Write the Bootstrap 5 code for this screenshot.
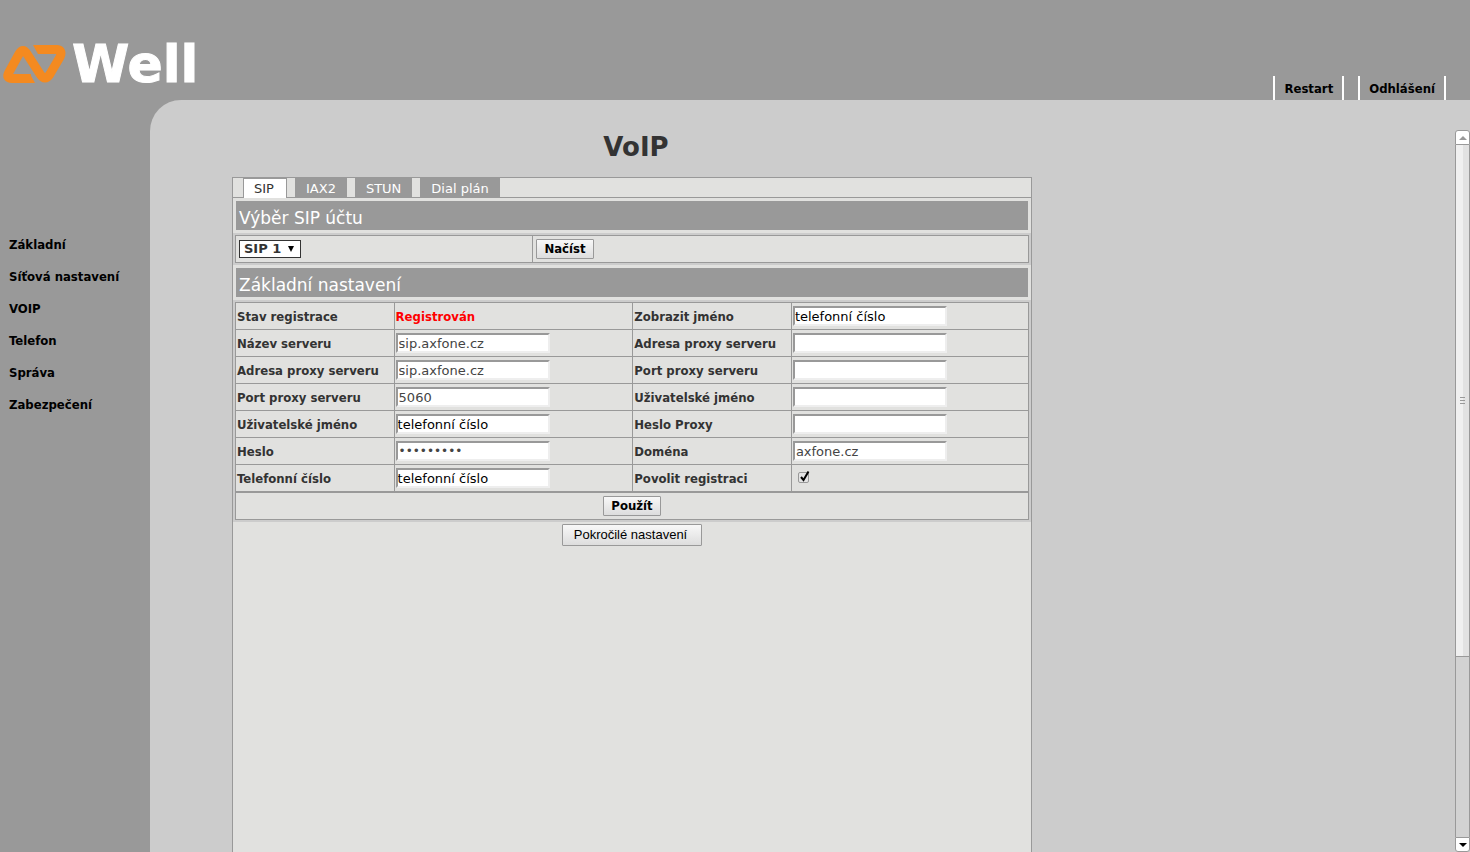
<!DOCTYPE html>
<html lang="cs">
<head>
<meta charset="utf-8">
<meta name="viewport" content="width=device-width, initial-scale=1">
<title>Well VoIP</title>
<link href="https://cdn.jsdelivr.net/npm/bootstrap@5.3.0/dist/css/bootstrap.min.css" rel="stylesheet">
<style>
  body { background: #999; color: #333; font: 13px/20px "DejaVu Sans", Verdana, sans-serif; }
  .side-link, .top-link, .grid th, .grid .status, .btn-small { font-family: "DejaVu Sans Condensed", "DejaVu Sans", sans-serif; font-weight: 700; }
  .top-bar { height: 100px; }
  .brand-word { font: 700 52px/52px "DejaVu Sans", sans-serif; color: #fff; -webkit-text-stroke: 1px #fff; }
  .top-links { gap: 14px; }
  .top-link { color: #000; text-decoration: none; border: solid #fff; border-width: 0 2px; line-height: 22px; padding: 2px 9px 0; }
  .side { width: 150px; padding: 135px 0 0 9px; }
  .side-link { color: #000; text-decoration: none; line-height: 20px; margin-bottom: 12px; }
  .content { background: #ccc; border-top-left-radius: 31px; }
  .page { padding-left: 82px; padding-top: 32px; }
  .page h1 { font: 700 26px/30px "DejaVu Sans", sans-serif; margin: 0 0 15px; padding-left: 8px; }
  .sheet, .sheet-head { max-width: 800px; }
  .sheet { background: #e1e1df; border: 1px solid #999; border-bottom: 0; }
  .tabs { height: 20px; border-bottom: 1px solid #999; padding-left: 10px; }
  .tabs .tab { color: #fff; background: #999; text-decoration: none; line-height: 21px; padding: 0 11px; height: 19px; }
  .tabs .tab.current { color: #333; background: #fff; border: 1px solid #999; border-bottom: 0; height: 20px; line-height: 19px; padding: 0 10px; min-width: 44px; }
  .caption-wrap { padding: 3px; }
  .caption-wrap h2 { background: #999; color: #fff; font: 400 17px/29px "DejaVu Sans", sans-serif; margin: 0; padding: 3px 3px 0; height: 29px; }
  .grid-wrap { background: #ccc; padding: 2px; }
  .grid { width: 100%; border-collapse: collapse; table-layout: fixed; background: #e1e1df; }
  .grid th, .grid td { border: 1px solid #999; padding: 0 1px; height: 27px; vertical-align: middle; }
  .grid th, .grid .status { padding-top: 2px; }
  .grid .lead-in { padding-left: 3px; }
  .grid .status { color: #f00; }
  .apply-row { border: 1px solid #999; background: #e1e1df; height: 28px; }
  .field { display: block; width: 154px; height: 20px; padding: 0 1px; border: 2px solid; border-color: #999 #eee #eee #999; border-radius: 0; background: #fff; color: #444; font: 13px/16px "DejaVu Sans", sans-serif; outline-offset: 0; }
  .field.own { color: #000; padding: 0; }
  .field[type=password] { font-size: 12px; }
  .pick { display: block; appearance: none; width: 62px; height: 18px; border: 1px solid #333; border-radius: 0; padding: 0 4px; color: #333; font: 700 13px/16px "DejaVu Sans", sans-serif; background: #fff url("data:image/svg+xml,%3Csvg xmlns='http://www.w3.org/2000/svg' width='6' height='6'%3E%3Cpath d='M0 0h6L3 6z'/%3E%3C/svg%3E") no-repeat right 6px center; }
  .btn-small, .btn-more { border: 1px solid #999; border-radius: 1px; background: linear-gradient(#f8f8f8, #ddd); color: #000; }
  .btn-small { line-height: 18px; height: 20px; padding: 0 7px; }
  .btn-more { font: 13px/20px "Liberation Sans", Arial, sans-serif; width: 140px; height: 22px; padding: 0 3px 0 0; }
  .more-row { padding-top: 2px; }
  .tick { display: block; appearance: none; width: 14px; height: 14px; margin: 0 0 2px 4px; background: url("data:image/svg+xml,%3Csvg xmlns='http://www.w3.org/2000/svg' width='14' height='14'%3E%3Crect x='1.5' y='2.500' width='10' height='10' rx='1.500' fill='%23e4e4e4' stroke='%23999'/%3E%3Cpath d='M4 7l2.500 3L11.500 1.500' fill='none' stroke='%23000' stroke-width='2'/%3E%3C/svg%3E"); }
  .scroller { width: 15px; margin-top: 30px; }
  .scroller .arrow { height: 15px; background: #fff; border: 1px solid #999; }
  .scroller .up { border-radius: 3px 3px 0 0; }
  .scroller .down { border-radius: 0 0 3px 3px; }
  .scroller .track { background: #d2d2d2; border: solid #999; border-width: 0 1px; }
  .scroller .thumb { height: 74%; border-bottom: 1px solid #999; background: linear-gradient(90deg, #f0f0f0 55%, #e2e2e2 55%); }
</style>
</head>
<body class="min-vh-100 d-flex flex-column">
<header class="top-bar d-flex justify-content-between align-items-end">
  <a href="#" class="d-flex align-items-center text-decoration-none mb-2" aria-label="Well">
    <svg width="68" height="56" viewBox="0 36 68 56" aria-hidden="true">
      <path d="M31 78.500H12Q6 78.500 8.500 73L19 54Q23 47 27 54L40 74Q45 82 50 74L60 57Q63 50 57 49.500H38" fill="none" stroke="#f48a20" stroke-width="9"/>
      <path d="M30 74l5 9h-5zM33 45h5v9z" fill="#f48a20"/>
    </svg>
    <span class="brand-word ps-1">Well</span>
  </a>
  <nav class="top-links d-flex me-4" aria-label="Systém">
    <a href="#" class="top-link">Restart</a>
    <a href="#" class="top-link">Odhlášení</a>
  </nav>
</header>
<div class="d-flex flex-grow-1">
  <nav class="side d-flex flex-column flex-shrink-0" aria-label="Menu">
    <a class="side-link" href="#">Základní</a>
    <a class="side-link" href="#">Síťová nastavení</a>
    <a class="side-link" href="#">VOIP</a>
    <a class="side-link" href="#">Telefon</a>
    <a class="side-link" href="#">Správa</a>
    <a class="side-link" href="#">Zabezpečení</a>
  </nav>
  <div class="content d-flex flex-grow-1">
    <main class="page flex-grow-1 d-flex flex-column">
      <div class="sheet-head"><h1 class="text-center">VoIP</h1></div>
      <form class="sheet flex-grow-1">
        <nav class="tabs d-flex gap-2" aria-label="Protokoly">
          <a href="#" class="tab current">SIP</a>
          <a href="#" class="tab">IAX2</a>
          <a href="#" class="tab">STUN</a>
          <a href="#" class="tab">Dial plán</a>
        </nav>
        <div class="caption-wrap"><h2>Výběr SIP účtu</h2></div>
        <div class="grid-wrap">
          <table class="grid">
            <colgroup><col style="width:37.5%"><col></colgroup>
            <tr>
              <td class="lead-in"><select class="pick" aria-label="SIP účet"><option>SIP 1</option></select></td>
              <td class="lead-in"><button type="button" class="btn-small d-block">Načíst</button></td>
            </tr>
          </table>
        </div>
        <div class="caption-wrap"><h2>Základní nastavení</h2></div>
        <div class="grid-wrap">
          <table class="grid">
            <colgroup><col style="width:20%"><col style="width:30.1%"><col style="width:20%"><col style="width:29.9%"></colgroup>
            <tr>
              <th>Stav registrace</th><td class="status">Registrován</td>
              <th><label for="display">Zobrazit jméno</label></th><td><input id="display" class="field own" value="telefonní číslo"></td>
            </tr>
            <tr>
              <th><label for="server">Název serveru</label></th><td><input id="server" class="field" value="sip.axfone.cz"></td>
              <th><label for="proxy2">Adresa proxy serveru</label></th><td><input id="proxy2" class="field"></td>
            </tr>
            <tr>
              <th><label for="proxy1">Adresa proxy serveru</label></th><td><input id="proxy1" class="field" value="sip.axfone.cz"></td>
              <th><label for="port2">Port proxy serveru</label></th><td><input id="port2" class="field"></td>
            </tr>
            <tr>
              <th><label for="port1">Port proxy serveru</label></th><td><input id="port1" class="field" value="5060"></td>
              <th><label for="user2">Uživatelské jméno</label></th><td><input id="user2" class="field"></td>
            </tr>
            <tr>
              <th><label for="user1">Uživatelské jméno</label></th><td><input id="user1" class="field own" value="telefonní číslo"></td>
              <th><label for="pass2">Heslo Proxy</label></th><td><input id="pass2" type="password" class="field"></td>
            </tr>
            <tr>
              <th><label for="pass1">Heslo</label></th><td><input id="pass1" type="password" class="field" value="heslo1234"></td>
              <th><label for="domain">Doména</label></th><td><input id="domain" class="field" value="axfone.cz"></td>
            </tr>
            <tr>
              <th><label for="phone">Telefonní číslo</label></th><td><input id="phone" class="field own" value="telefonní číslo"></td>
              <th><label for="register">Povolit registraci</label></th><td><input id="register" type="checkbox" class="tick" checked></td>
            </tr>
          </table>
          <div class="apply-row d-flex justify-content-center align-items-center"><button type="button" class="btn-small">Použít</button></div>
        </div>
        <div class="more-row d-flex justify-content-center"><button type="button" class="btn-more">Pokročilé nastavení</button></div>
      </form>
    </main>
    <div class="scroller d-flex flex-column flex-shrink-0" aria-hidden="true">
      <div class="arrow up d-flex align-items-center justify-content-center"><svg width="8" height="4"><path d="M4 0l4 4H0z" fill="#999"/></svg></div>
      <div class="track flex-grow-1 d-flex flex-column"><div class="thumb d-flex align-items-center justify-content-center"><svg width="5" height="7"><path d="M0 .5h5M0 3.500h5M0 6.500h5" stroke="#999"/></svg></div></div>
      <div class="arrow down d-flex align-items-center justify-content-center"><svg width="8" height="4"><path d="M0 0h8L4 4z"/></svg></div>
    </div>
  </div>
</div>
<script src="https://cdn.jsdelivr.net/npm/bootstrap@5.3.0/dist/js/bootstrap.bundle.min.js"></script>
</body>
</html>
